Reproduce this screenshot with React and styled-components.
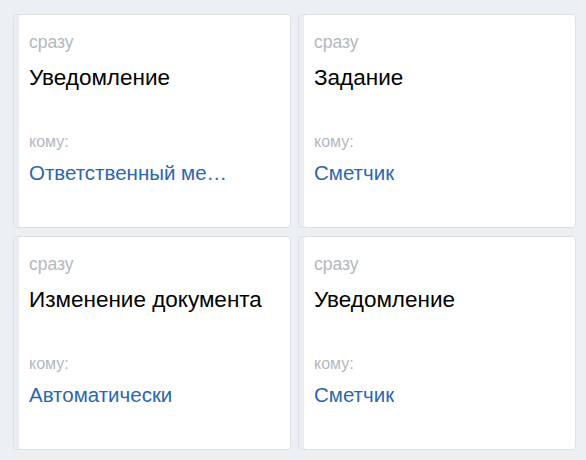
import styled, { createGlobalStyle } from "styled-components";

const rules = [
  { when: "сразу", title: "Уведомление", to: "Ответственный менеджер" },
  { when: "сразу", title: "Задание", to: "Сметчик" },
  { when: "сразу", title: "Изменение документа", to: "Автоматически" },
  { when: "сразу", title: "Уведомление", to: "Сметчик" },
];

function App() {
  return (
    <>
      <GlobalStyle />
      <Page>
        <Grid>
          {rules.map((rule, i) => (
            <Card key={i}>
              <When>{rule.when}</When>
              <Title>{rule.title}</Title>
              <ToLabel>кому:</ToLabel>
              <ToLink>{rule.to}</ToLink>
            </Card>
          ))}
        </Grid>
      </Page>
    </>
  );
}

const GlobalStyle = createGlobalStyle`
  body {
    margin: 0;
    background: #edf0f3;
    font-family: "Liberation Sans", Arial, sans-serif;
  }
`;

const Page = styled.div`
  width: 586px;
  height: 460px;
  padding: 14px 0 0 13px;
  box-sizing: border-box;
  overflow: hidden;
`;

const Grid = styled.div`
  display: grid;
  grid-template-columns: 278px 278px;
  grid-auto-rows: 214px;
  column-gap: 7px;
  row-gap: 8px;
`;

/* the pale stripe on the left sits inside the 1px frame */
const Card = styled.div`
  display: flex;
  flex-direction: column;
  align-items: flex-start;
  background: #fff;
  border: 1px solid #dde1e6;
  border-radius: 4px;
  box-shadow: inset 5px 0 0 #eaedf1;
  padding: 17px 12px 0 15px;
  box-sizing: border-box;
`;

const When = styled.div`
  font-size: 17.5px;
  line-height: 20px;
  color: #b3b8bf;
`;

const Title = styled.div`
  margin-top: 13px;
  font-size: 22.5px;
  line-height: 25px;
  color: #000;
  white-space: nowrap;
`;

const ToLabel = styled.div`
  margin-top: 42px;
  font-size: 16px;
  line-height: 19px;
  color: #b3b8bf;
`;

const ToLink = styled.div`
  margin-top: 10px;
  max-width: 203px;
  font-size: 20.5px;
  line-height: 24px;
  color: #2b66b0;
  white-space: nowrap;
  overflow: hidden;
  text-overflow: ellipsis;
  cursor: pointer;
`;

export default App;
